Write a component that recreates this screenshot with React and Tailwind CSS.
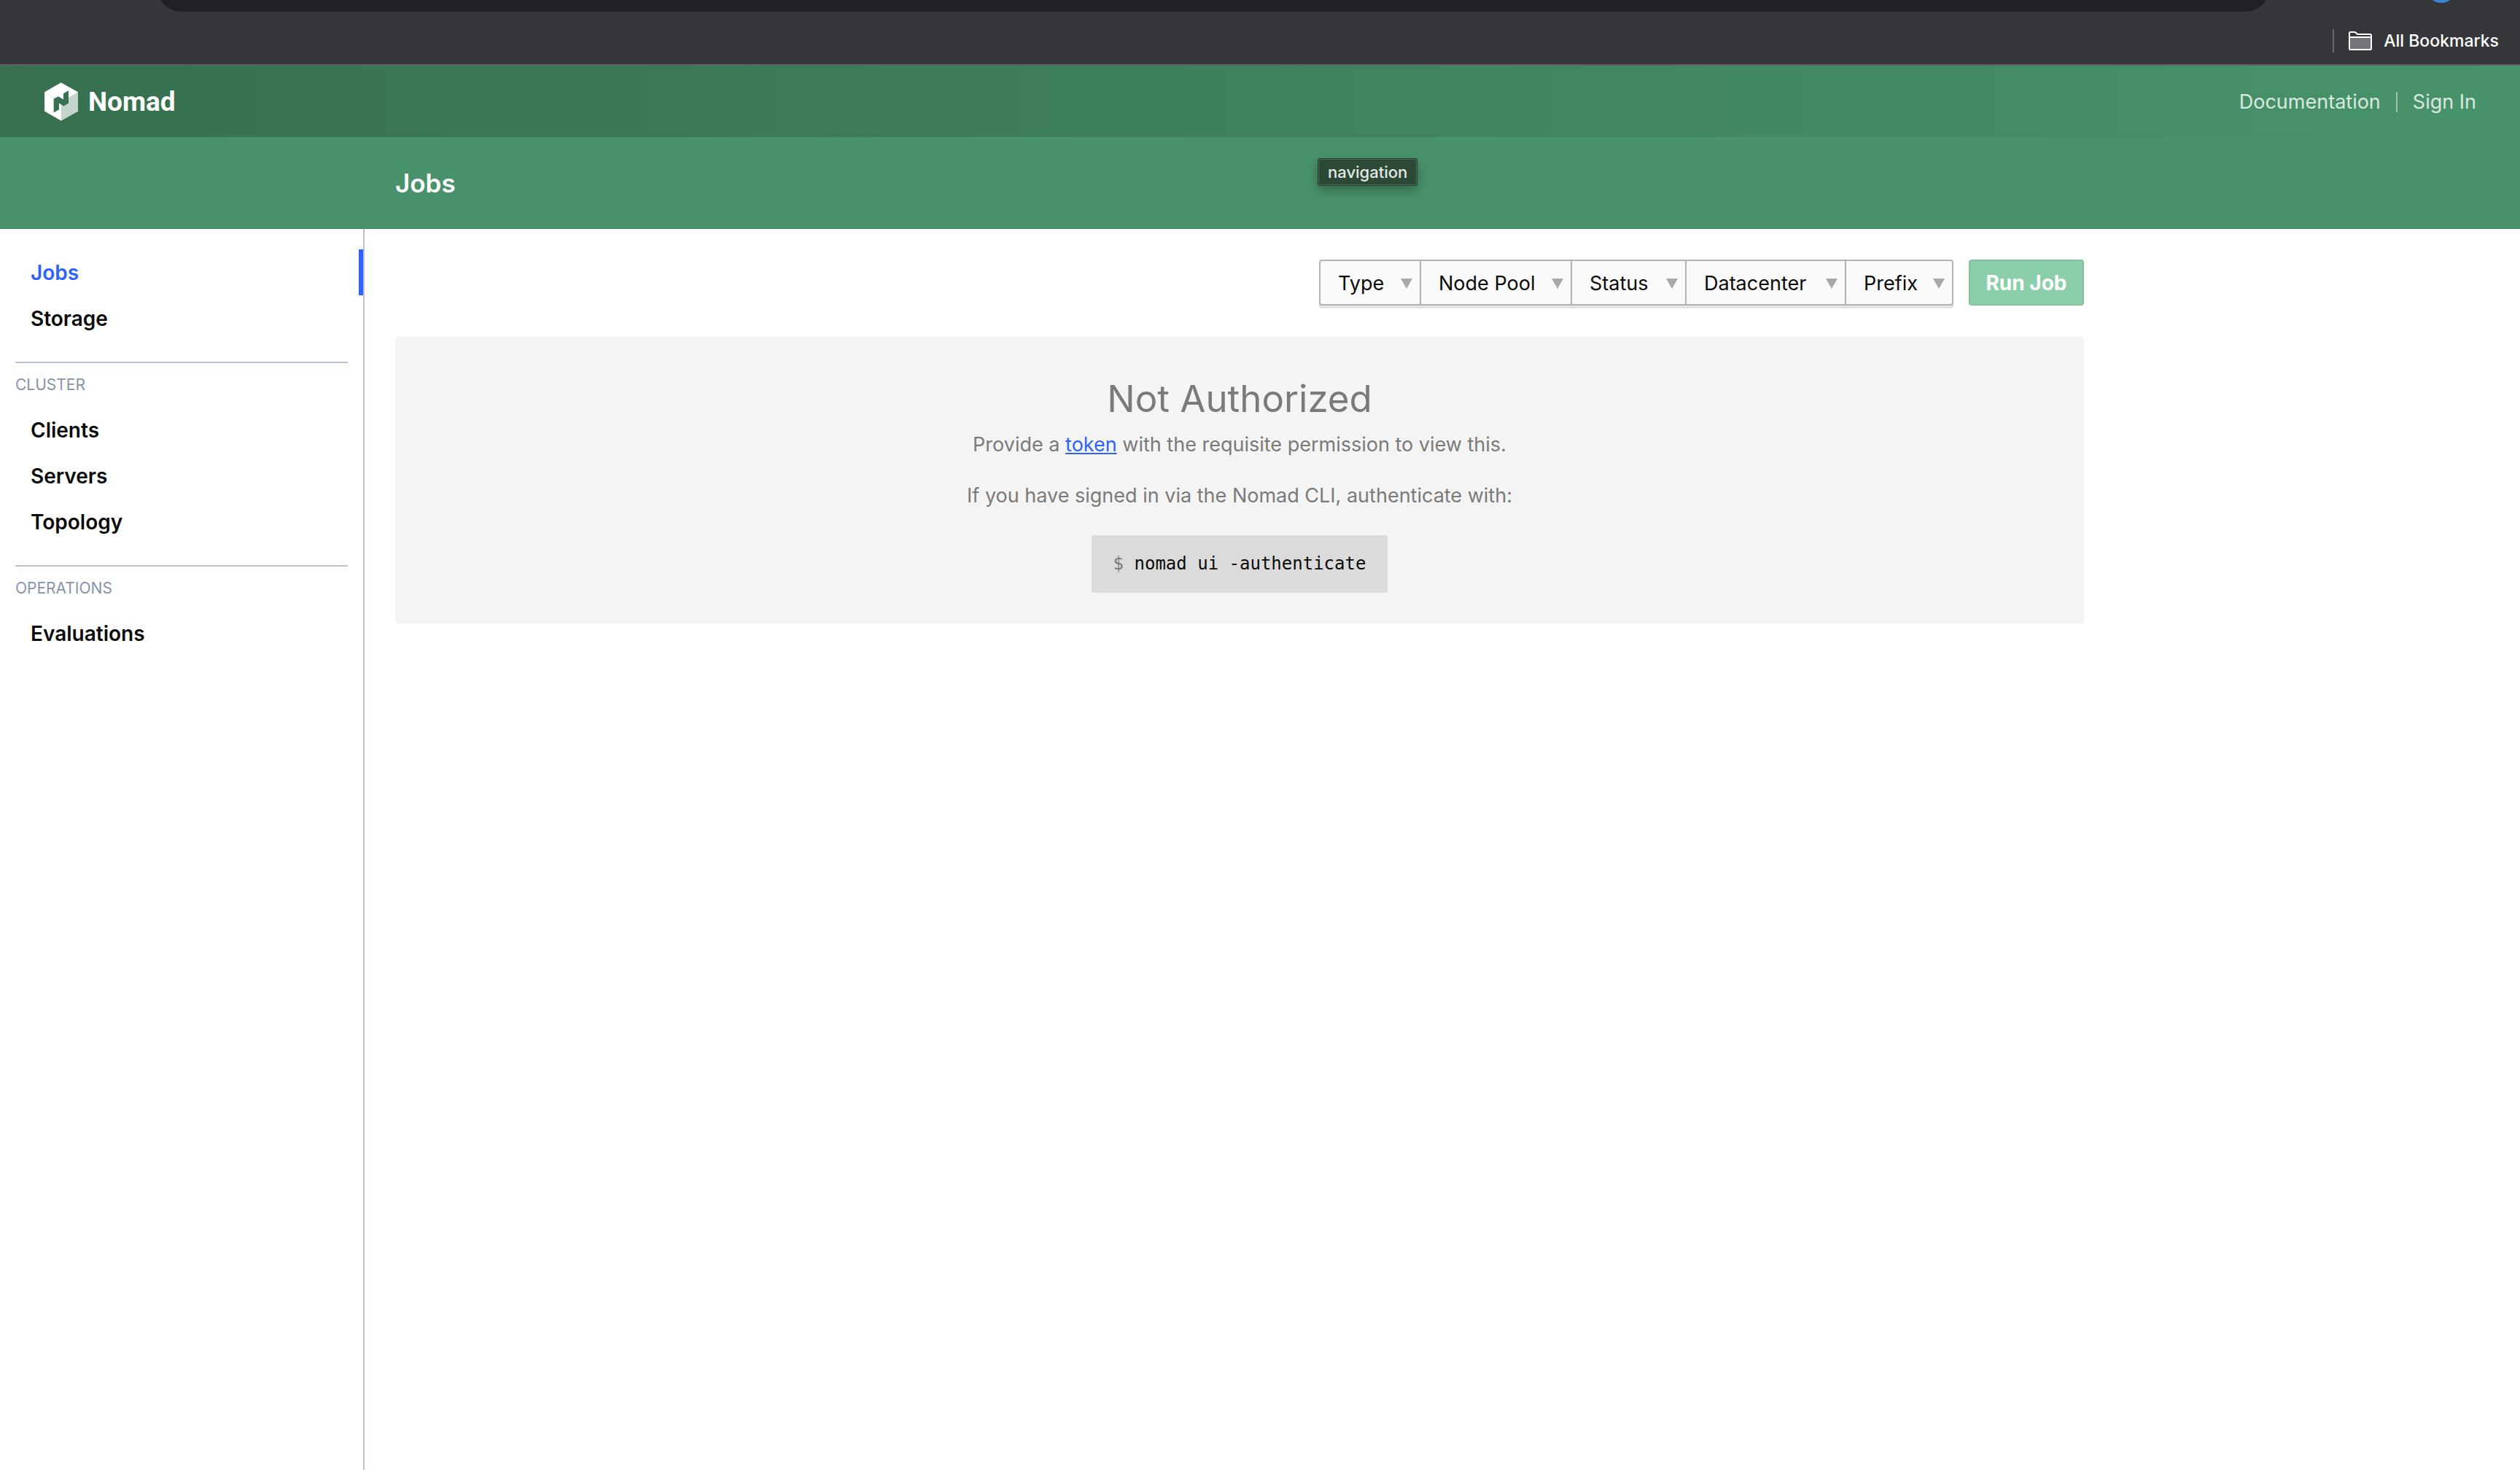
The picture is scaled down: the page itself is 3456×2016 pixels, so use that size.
import React from "react";

const sections = [
  { items: [{ label: "Jobs", active: true }, { label: "Storage" }] },
  { title: "Cluster", items: [{ label: "Clients" }, { label: "Servers" }, { label: "Topology" }] },
  { title: "Operations", items: [{ label: "Evaluations" }] },
];

const filters = [
  { label: "Type", width: "w-[138px]" },
  { label: "Node Pool", width: "w-[207px]" },
  { label: "Status", width: "w-[157px]" },
  { label: "Datacenter", width: "w-[219px]" },
  { label: "Prefix", width: "w-[145px]" },
];

function FolderIcon() {
  return (
    <svg width="32" height="26" viewBox="0 0 32 26" fill="none" aria-hidden="true">
      <path d="M1 8h30v16H1z" fill="#737477" />
      <path
        d="M1 23.5V2.500Q1 1 2.500 1H8q1 0 1.800.8L12 4h17.500Q31 4 31 5.500v18Q31 25 29.500 25h-27Q1 25 1 23.500ZM1 8h30"
        stroke="#fff"
        strokeWidth="2"
      />
    </svg>
  );
}

function NomadMark() {
  return (
    <svg width="46" height="53" viewBox="27 21 138 158" aria-hidden="true">
      <path d="M95 21 165 60v79L95 178 27 139V60Z" fill="#fff" />
      <path d="M165 60v79L95 178V100Z" fill="#c3d4ca" />
      <path d="M27 61l39 23" stroke="#9dbba9" strokeWidth="2" strokeDasharray="3 3" />
      <path
        d="M65 88 84 78l21 13V66l21-12v52l-20 12-19-12v26l-22 13Z"
        fill="#37714f"
      />
    </svg>
  );
}

function BrowserBar() {
  return (
    <div className="h-[90px] border-b-2 border-[#5f6063] bg-[#35363a]">
      <div className="flex h-4 items-end overflow-hidden">
        <div className="ml-[215px] h-[68px] flex-1 rounded-full bg-[#202124]" />
        <div className="mr-[87px] mb-3 ml-[214px] size-[42px] rounded-full bg-[#3a84cb]" />
      </div>
      <div className="flex h-[72px] items-center justify-end pt-2 pr-[29px]">
        <div className="h-8 w-[2px] bg-[#6c6d70]" />
        <button className="ml-5 flex items-center gap-4 text-[23px] leading-8 font-medium text-white">
          <FolderIcon />
          All Bookmarks
        </button>
      </div>
    </div>
  );
}

function Header() {
  return (
    <header>
      <div className="flex h-[98px] items-center justify-between bg-linear-to-r from-[#36704e] to-[#48936b] pr-[60px] pl-[61px]">
        <a href="#home" className="flex items-center gap-[14px] text-white">
          <NomadMark />
          <span className="pt-[2px] font-[Roboto,sans-serif] text-[37px] leading-[42px] font-bold">Nomad</span>
        </a>
        <nav className="flex items-center gap-[21px] pt-[2px] text-[27px] leading-[42px] text-[#d9e9e0]">
          <a href="#docs">Documentation</a>
          <div className="h-7 w-[2px] bg-[#9ac5ad]" />
          <a href="#signin">Sign In</a>
        </nav>
      </div>
      <div className="relative flex h-[126px] items-center border-b border-[#418561] bg-[#48936b] pl-[542px]">
        <h1 className="text-[35px] leading-[42px] font-semibold text-white">Jobs</h1>
        <div
          role="tooltip"
          className="absolute top-[29px] left-[1807px] rounded-[2px] border border-[#22402f] bg-[#2c4837] shadow-[0_6px_16px_rgba(0,0,0,0.3)]"
        >
          <div className="rounded-[1px] border border-[#4f6a5a] px-3 text-[22px] leading-[34px] font-medium text-[#e4e8e5]">
            navigation
          </div>
        </div>
      </div>
    </header>
  );
}

function Sidebar() {
  return (
    <aside className="w-[500px] shrink-0 border-r-2 border-[#bbc0d2] pt-7">
      {sections.map((section, i) => (
        <div key={i}>
          {section.title && (
            <p className="mx-[21px] mt-7 border-t-2 border-[#bbc0d2] text-[21px] leading-[60px] text-[#8693ad] uppercase">
              {section.title}
            </p>
          )}
          <ul>
            {section.items.map((item) => (
              <li key={item.label}>
                <a
                  href={"#" + item.label.toLowerCase()}
                  className={
                    "block border-r-6 pt-[2px] pl-[42px] text-[28px] leading-[61px] font-semibold " +
                    (item.active ? "border-[#2e62fa] text-[#2e62fa]" : "border-transparent text-[#0a0a0a]")
                  }
                >
                  {item.label}
                </a>
              </li>
            ))}
          </ul>
        </div>
      ))}
    </aside>
  );
}

function Filters() {
  return (
    <div className="flex rounded-[4px] border-2 border-[#b4b4b4] bg-[#fafafa] shadow-[0_4px_0_#e3e3e3]">
      {filters.map((f) => (
        <button
          key={f.label}
          className={
            "flex items-center justify-between border-r-2 border-[#b4b4b4] pt-[2px] pr-[10px] pl-6 text-[27px] leading-[57px] text-[#0a0a0a] last:border-r-0 " +
            f.width
          }
        >
          {f.label}
          <svg width="16" height="14" viewBox="0 0 16 14" aria-hidden="true">
            <path d="M0 0h16L8 14Z" fill="#a9a9a9" />
          </svg>
        </button>
      ))}
    </div>
  );
}

export default function App() {
  return (
    <div className="flex min-h-screen flex-col bg-white font-[Inter,sans-serif]">
      <BrowserBar />
      <Header />
      <div className="flex flex-1">
        <Sidebar />
        <main className="max-w-[2400px] flex-1 p-[42px]">
          <div className="flex items-stretch justify-end gap-[21px]">
            <Filters />
            <button
              disabled
              className="w-[158px] rounded-[4px] border-2 border-[#84c1a0] bg-[#8bcfaa] pt-[2px] text-[28px] leading-[57px] font-bold text-white"
            >
              Run Job
            </button>
          </div>
          <section className="mt-[42px] flex flex-col items-center rounded-[4px] bg-[#f4f4f4] px-[42px] pt-11 pb-[42px] text-center text-[27px] leading-[42px] text-[#7a7a7a]">
            <h2 className="text-[51px] leading-[84px]">Not Authorized</h2>
            <p>
              Provide a{" "}
              <a href="#token" className="text-[#2e62fa] underline">
                token
              </a>{" "}
              with the requisite permission to view this.
            </p>
            <p className="mt-7">If you have signed in via the Nomad CLI, authenticate with:</p>
            <pre className="mt-[33px] rounded-[4px] bg-[#dbdbdb] px-[30px] font-['DejaVu_Sans_Mono',monospace] text-[24px] leading-[79px] text-[#0a0a0a]">
              <span className="text-[#7a7a7a]">$</span> nomad ui -authenticate
            </pre>
          </section>
        </main>
      </div>
    </div>
  );
}
